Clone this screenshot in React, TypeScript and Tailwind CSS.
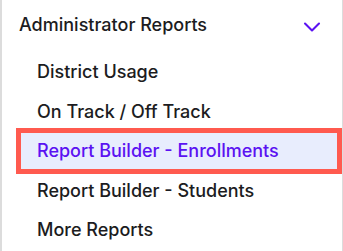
import { ChevronDown } from 'lucide-react';

const items = [
  'District Usage',
  'On Track / Off Track',
  'Report Builder - Enrollments',
  'Report Builder - Students',
  'More Reports',
];

const activeItem = 'Report Builder - Enrollments';

export default function App() {
  return (
    <div
      className="h-[251px] w-[343px] overflow-hidden border-l-2 border-r border-[#dcdcdc] bg-white text-[18px] text-[#1c1c21]"
      style={{ fontFamily: 'Inter, "Noto Sans", sans-serif' }}
    >
      <div className="flex h-[48px] items-center justify-between pl-[17px] pr-[16px]">
        <span className="font-medium">Administrator Reports</span>
        <ChevronDown className="mt-[6px] h-7 w-7 text-[#5b12f2]" strokeWidth={1.8} />
      </div>
      <ul className="ml-[17px] mr-[3px] mt-[4px]">
        {items.map((item) => {
          const active = item === activeItem;
          return (
            <li
              key={item}
              className={
                active
                  ? 'flex h-[39.5px] items-center bg-[#e8edfd] pl-[18px] font-medium text-[#5b12f2] outline-[5px] outline-offset-[-2px] outline-[#ff5a4f] outline-solid'
                  : 'flex h-[39.5px] items-center pl-[18px] font-medium'
              }
            >
              {item}
            </li>
          );
        })}
      </ul>
    </div>
  );
}
